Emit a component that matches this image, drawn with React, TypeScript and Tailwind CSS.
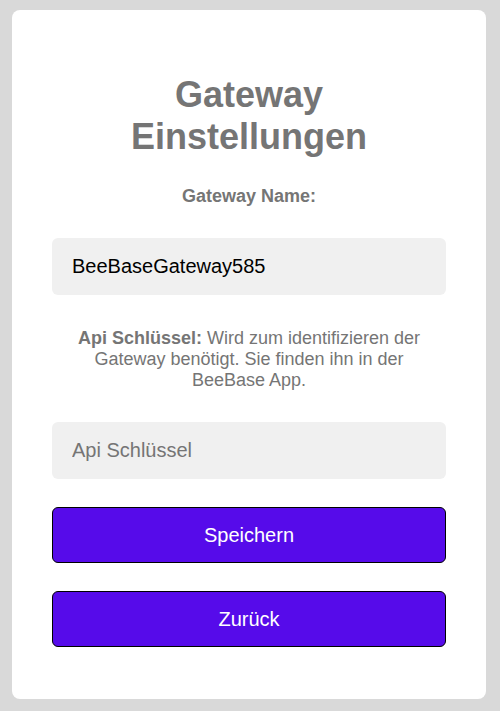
import { useState } from 'react';

export default function App() {
  const [name, setName] = useState('BeeBaseGateway585');
  const [apiKey, setApiKey] = useState('');

  return (
    <div className="min-h-[711px] bg-[#d9d9d9] px-3 pt-[10px] pb-3 font-['Liberation_Sans',Arial,sans-serif]">
      <div className="w-[474px] rounded-lg bg-white px-10 pt-10 pb-[52px] text-center">
        {/* Title */}
        <h1 className="mt-6 text-[36px] font-bold leading-[42px] text-[#757575]">
          Gateway
          <br />
          Einstellungen
        </h1>

        {/* Gateway name */}
        <div className="mt-7 text-[18px] font-bold leading-[21px] text-[#757575]">Gateway Name:</div>
        <input
          value={name}
          onChange={(e) => setName(e.target.value)}
          className="mt-[31px] block h-[57px] w-full rounded-md bg-[#f0f0f0] px-5 text-left text-[20px] text-black outline-none"
        />

        {/* Api key */}
        <p className="mt-[33px] px-1 text-[18px] leading-[21px] text-[#757575]">
          <b>Api Schlüssel:</b> Wird zum identifizieren der Gateway benötigt. Sie finden ihn in der BeeBase App.
        </p>
        <input
          value={apiKey}
          onChange={(e) => setApiKey(e.target.value)}
          placeholder="Api Schlüssel"
          className="mt-[31px] block h-[57px] w-full rounded-md bg-[#f0f0f0] px-5 text-left text-[20px] text-black outline-none placeholder:text-[#757575]"
        />

        {/* Actions */}
        <button className="mt-7 block h-14 w-full rounded-md border border-black bg-[#560bea] text-[20px] text-white">
          Speichern
        </button>
        <button className="mt-7 block h-14 w-full rounded-md border border-black bg-[#560bea] text-[20px] text-white">
          Zurück
        </button>
      </div>
    </div>
  );
}
